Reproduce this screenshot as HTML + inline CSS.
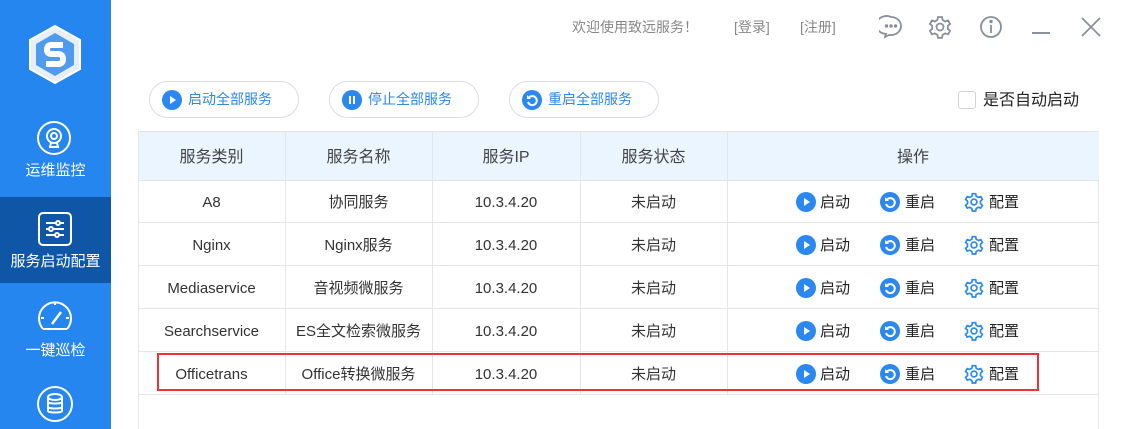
<!DOCTYPE html>
<html><head><meta charset="utf-8"><style>
*{margin:0;padding:0;box-sizing:border-box}
body{width:1123px;height:429px;overflow:hidden;background:#fff;font-family:"Liberation Sans","Noto Sans CJK SC",sans-serif;position:relative;color:#333}
.a{position:absolute}
.side{left:0;top:0;width:111px;height:429px;background:#2486ee}
.nav{position:absolute;left:0;width:111px;color:#fff;font-size:15px;text-align:center;line-height:20px}
.btn{position:absolute;top:81px;height:37px;border:1px solid #d9dde3;border-radius:19px;color:#2a88f0;font-size:14px;line-height:35px;padding-left:38px}
.btn svg{position:absolute;left:12px;top:8px}
.tbl{left:138px;top:131px;width:961px;height:298px;border:1px solid #e3e6ea;border-bottom:none}
.hl{position:absolute;left:0;width:960px;height:1px;background:#e3e6ea}
.vl{position:absolute;top:0;width:1px;height:263px;background:#e3e6ea}
.c{position:absolute;text-align:center;font-size:15px;color:#333;height:20px;line-height:20px;white-space:nowrap}
.h{color:#444;font-size:16px}
.op{position:absolute;font-size:15px;color:#222;height:20px;line-height:20px}
</style></head><body>
<div class="a side"></div>
<div class="a" style="left:0;top:197px;width:111px;height:86px;background:#0f57a6"></div>
<svg class="a" style="left:25px;top:23px" width="60" height="64" viewBox="0 0 60 64">
<polygon points="30,3 55,17 55,46 30,60 5,46 5,17" fill="#e8eef5" stroke="#fff" stroke-width="2"/>
<polygon points="30,10 49,21 49,42 30,53 11,42 11,21" fill="#4e9cf0"/>
<path d="M38 22 H26 Q22 22 22 27 Q22 31 27 31 H33 Q38 31 38 36 Q38 41 33 41 H21" stroke="#fff" stroke-width="6" fill="none"/>
</svg>
<svg class="a" style="left:36px;top:120px" width="36" height="36" viewBox="0 0 36 36" fill="none" stroke="#fff" stroke-width="2"><circle cx="18" cy="18" r="16"/><circle cx="18" cy="16" r="7"/><circle cx="18" cy="16" r="3"/><path d="M13 27h10M15 23l-1 4M21 23l1 4"/></svg>
<div class="nav" style="top:161px">运维监控</div>
<svg class="a" style="left:37px;top:211px" width="36" height="36" viewBox="0 0 36 36" fill="none" stroke="#fff" stroke-width="2"><rect x="2" y="2" width="32" height="32" rx="4"/><path d="M9 12h18M9 18h18M9 24h18"/><circle cx="21" cy="12" r="2" fill="#0f57a6"/><circle cx="14" cy="18" r="2" fill="#0f57a6"/><circle cx="20" cy="24" r="2" fill="#0f57a6"/></svg>
<div class="nav" style="top:252px">服务启动配置</div>
<svg class="a" style="left:36px;top:299px" width="38" height="38" viewBox="0 0 38 38" fill="none" stroke="#fff" stroke-width="2"><path d="M7 30 A16 16 0 1 1 31 30"/><path d="M7 30H31"/><path d="M16 25 L25 13" stroke-width="2.5"/><path d="M19 3v3M5 19h3M33 19h-3"/></svg>
<div class="nav" style="top:341px">一键巡检</div>
<svg class="a" style="left:36px;top:385px" width="38" height="38" viewBox="0 0 38 38" fill="none" stroke="#fff" stroke-width="2"><circle cx="19" cy="19" r="17"/><ellipse cx="19" cy="12" rx="7" ry="3"/><path d="M12 12v14c0 2 14 2 14 0V12M12 17c0 2 14 2 14 0M12 22c0 2 14 2 14 0"/></svg>

<div class="a" style="left:572px;top:17px;font-size:14px;color:#888;line-height:20px">欢迎使用致远服务！</div>
<div class="a" style="left:734px;top:17px;font-size:14px;color:#888;line-height:20px">[登录]</div>
<div class="a" style="left:800px;top:17px;font-size:14px;color:#888;line-height:20px">[注册]</div>
<svg class="a" style="left:879px;top:15px" width="24" height="24" viewBox="0 0 24 24" fill="none" stroke="#8a9099" stroke-width="1.8"><path d="M12 2a10 9 0 1 0 -5 17l-1 3 4-2a10 9 0 0 0 2 0a10 9 0 0 0 0-18z"/><circle cx="7.5" cy="11" r=".8" fill="#8a9099"/><circle cx="12" cy="11" r=".8" fill="#8a9099"/><circle cx="16.5" cy="11" r=".8" fill="#8a9099"/></svg>
<svg class="a" style="left:928px;top:15px" width="24" height="24" viewBox="0 0 24 24" fill="none" stroke="#8a9099" stroke-width="1.8"><path d="M10 2h4l.6 3 2.6 1.5 2.9-1 2 3.4-2.3 2v3l2.3 2-2 3.4-2.9-1-2.6 1.5-.6 3h-4l-.6-3-2.6-1.5-2.9 1-2-3.4 2.3-2v-3l-2.3-2 2-3.4 2.9 1L9.4 5z"/><circle cx="12" cy="12" r="3.5"/></svg>
<svg class="a" style="left:979px;top:15px" width="24" height="24" viewBox="0 0 24 24" fill="none" stroke="#8a9099" stroke-width="1.8"><circle cx="12" cy="12" r="10"/><path d="M12 10v8"/><circle cx="12" cy="6.5" r=".8" fill="#8a9099"/></svg>
<div class="a" style="left:1032px;top:32px;width:18px;height:2px;background:#8a9099"></div>
<svg class="a" style="left:1081px;top:17px" width="20" height="20" viewBox="0 0 20 20" stroke="#8a9099" stroke-width="1.8"><path d="M1 1L19 19M19 1L1 19"/></svg>

<div class="btn" style="left:149px;width:150px">启动全部服务<svg width="20" height="20" viewBox="0 0 20 20"><circle cx="10" cy="10" r="10" fill="#2a88f0"/><path d="M8 6l6 4-6 4z" fill="#fff"/></svg></div>
<div class="btn" style="left:329px;width:150px">停止全部服务<svg width="20" height="20" viewBox="0 0 20 20"><circle cx="10" cy="10" r="10" fill="#2a88f0"/><rect x="7" y="6" width="2" height="8" fill="#fff"/><rect x="11" y="6" width="2" height="8" fill="#fff"/></svg></div>
<div class="btn" style="left:509px;width:150px">重启全部服务<svg width="20" height="20" viewBox="0 0 20 20"><circle cx="10" cy="10" r="10" fill="#2a88f0"/><path d="M7 7.5A4.5 4.5 0 1 1 6 12" stroke="#fff" stroke-width="2" fill="none"/><path d="M5 5v4h4z" fill="#fff"/></svg></div>
<div class="a" style="left:958px;top:91px;width:18px;height:18px;border:1px solid #d0d4da;border-radius:3px"></div>
<div class="a" style="left:983px;top:91px;font-size:16px;color:#222;line-height:20px">是否自动启动</div>

<div class="a tbl">
<div class="a" style="left:0;top:0;width:960px;height:48px;background:#eaf5ff"></div>
<div class="hl" style="top:48px"></div><div class="hl" style="top:90px"></div><div class="hl" style="top:133px"></div><div class="hl" style="top:176px"></div><div class="hl" style="top:219px"></div><div class="hl" style="top:262px"></div>
<div class="vl" style="left:146px"></div><div class="vl" style="left:293px"></div><div class="vl" style="left:441px"></div><div class="vl" style="left:588px"></div>
</div>
<div class="a" style="left:157px;top:353px;width:882px;height:38px;border:2px solid #ee3535"></div>

<div class="c h" style="left:138px;width:147px;top:148px">服务类别</div>
<div class="c h" style="left:285px;width:147px;top:148px">服务名称</div>
<div class="c h" style="left:432px;width:148px;top:148px">服务IP</div>
<div class="c h" style="left:580px;width:147px;top:148px">服务状态</div>
<div class="c h" style="left:727px;width:372px;top:148px">操作</div>

<div id="rows"></div>
<script>
var d=[["A8","协同服务"],["Nginx","Nginx服务"],["Mediaservice","音视频微服务"],["Searchservice","ES全文检索微服务"],["Officetrans","Office转换微服务"]];
var ys=[201,244,287,330,373],h="";
d.forEach(function(r,i){var t=ys[i]-8;
h+='<div class="c" style="left:138px;width:147px;top:'+t+'px">'+r[0]+'</div>';
h+='<div class="c" style="left:285px;width:147px;top:'+t+'px">'+r[1]+'</div>';
h+='<div class="c" style="left:432px;width:148px;top:'+t+'px">10.3.4.20</div>';
h+='<div class="c" style="left:580px;width:147px;top:'+t+'px">未启动</div>';
h+='<svg class="a" style="left:796px;top:'+(ys[i]-9)+'px" width="20" height="20" viewBox="0 0 20 20"><circle cx="10" cy="10" r="10" fill="#2a88f0"/><path d="M8 6l6 4-6 4z" fill="#fff"/></svg><div class="op" style="left:820px;top:'+t+'px">启动</div>';
h+='<svg class="a" style="left:880px;top:'+(ys[i]-9)+'px" width="20" height="20" viewBox="0 0 20 20"><circle cx="10" cy="10" r="10" fill="#2a88f0"/><path d="M7 7.5A4.5 4.5 0 1 1 6 12" stroke="#fff" stroke-width="2" fill="none"/><path d="M5 5v4h4z" fill="#fff"/></svg><div class="op" style="left:905px;top:'+t+'px">重启</div>';
h+='<svg class="a" style="left:964px;top:'+(ys[i]-9)+'px" width="20" height="20" viewBox="0 0 24 24" fill="none" stroke="#2a88f0" stroke-width="2"><path d="M10 2h4l.6 3 2.6 1.5 2.9-1 2 3.4-2.3 2v3l2.3 2-2 3.4-2.9-1-2.6 1.5-.6 3h-4l-.6-3-2.6-1.5-2.9 1-2-3.4 2.3-2v-3l-2.3-2 2-3.4 2.9 1L9.4 5z"/><circle cx="12" cy="12" r="3.5"/></svg><div class="op" style="left:989px;top:'+t+'px">配置</div>';
});
document.getElementById("rows").innerHTML=h;
</script>
</body></html>
